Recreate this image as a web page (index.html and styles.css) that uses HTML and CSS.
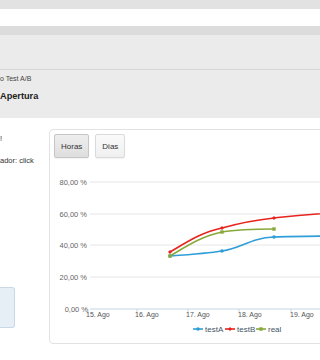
FILE: index.html
```html
<!DOCTYPE html>
<html lang="es">
<head>
    <meta charset="UTF-8">
    <meta name="viewport" content="width=device-width, initial-scale=1.0">
    <title>Test A/B - Apertura</title>
    <link rel="stylesheet" href="styles.css">
</head>
<body>
    <div class="topbar"></div>
    <div class="searchbar"></div>
    <div class="navbar"></div>
    <div class="toolbar"></div>

    <div class="titlebar">
        <p class="crumb">o Test A/B</p>
        <h1>Apertura</h1>
    </div>

    <div class="content">
        <div class="sidebar">
            <p class="note">!</p>
            <p class="note second">ador: click</p>
            <div class="infobox"></div>
        </div>

        <div class="chart-card">
            <div class="range-buttons">
                <button class="btn active">Horas</button>
                <button class="btn">Dias</button>
            </div>
            <svg class="chart" width="298" height="181" viewBox="0 0 298 181">
                <!-- grid -->
                <g class="grid">
                    <line x1="40" y1="20" x2="300" y2="20"/>
                    <line x1="40" y1="52" x2="300" y2="52"/>
                    <line x1="40" y1="83" x2="300" y2="83"/>
                    <line x1="40" y1="115" x2="300" y2="115"/>
                </g>
                <g class="axis">
                    <line x1="40" y1="147" x2="300" y2="147"/>
                    <line x1="38" y1="147" x2="38" y2="151"/>
                    <line x1="87" y1="147" x2="87" y2="151"/>
                    <line x1="138" y1="147" x2="138" y2="151"/>
                    <line x1="189" y1="147" x2="189" y2="151"/>
                    <line x1="241" y1="147" x2="241" y2="151"/>
                </g>
                <g class="ylabels">
                    <text x="37" y="22.7">80,00 %</text>
                    <text x="37" y="54.7">60,00 %</text>
                    <text x="37" y="85.7">40,00 %</text>
                    <text x="37" y="117.7">20,00 %</text>
                    <text x="38" y="149.7">0,00 %</text>
                </g>
                <g class="xlabels">
                    <text x="36" y="155">15. Ago</text>
                    <text x="85" y="155">16. Ago</text>
                    <text x="136" y="155">17. Ago</text>
                    <text x="188" y="155">18. Ago</text>
                    <text x="240" y="155">19. Ago</text>
                </g>

                <!-- series -->
                <path class="s-a" d="M120,94 C148,92 160,91 172,89 C192,86 200,76 224,75 C245,74 260,74 300,74"/>
                <path class="s-b" d="M120,90 C137,80 152,70 172,66 C190,61 205,58 224,56 C242,54 258,52 300,50"/>
                <path class="s-c" d="M120,94 C137,84 152,74 172,70 C190,67 205,67 224,67"/>

                <g class="m-a">
                    <circle cx="120" cy="94" r="1.8"/>
                    <circle cx="172" cy="89" r="1.8"/>
                    <circle cx="224" cy="75" r="1.8"/>
                </g>
                <g class="m-b">
                    <path d="M120,88 l2,2 -2,2 -2,-2z"/>
                    <path d="M172,64 l2,2 -2,2 -2,-2z"/>
                    <path d="M224,54 l2,2 -2,2 -2,-2z"/>
                </g>
                <g class="m-c">
                    <rect x="118.3" y="92.3" width="3.4" height="3.4"/>
                    <rect x="170.3" y="68.3" width="3.4" height="3.4"/>
                    <rect x="222.3" y="65.3" width="3.4" height="3.4"/>
                </g>

                <!-- legend -->
                <g class="legend">
                    <line class="s-a" x1="143" y1="167" x2="153" y2="167"/>
                    <circle class="m-a" cx="148" cy="167" r="1.8"/>
                    <text x="155" y="169.7">testA</text>
                    <line class="s-b" x1="175" y1="167" x2="185" y2="167"/>
                    <path class="m-b" d="M180,165 l2,2 -2,2 -2,-2z"/>
                    <text x="187" y="169.7">testB</text>
                    <line class="s-c" x1="206" y1="167" x2="216" y2="167"/>
                    <rect class="m-c" x="209.3" y="165.3" width="3.4" height="3.4"/>
                    <text x="218" y="169.7">real</text>
                </g>
            </svg>
        </div>
    </div>
</body>
</html>
```

FILE: styles.css
```css
body {
    margin: 0;
    font-family: 'Liberation Sans', Arial, sans-serif;
    color: #333;
    background-color: #fff;
    overflow: hidden;
}
.topbar {
    height: 9px;
    background-color: #e2e2e2;
}
.searchbar {
    height: 17px;
    background-color: #fff;
}
.navbar {
    height: 9px;
    background-color: #dcdcdc;
}
.toolbar {
    height: 34px;
    background-color: #ebebeb;
    border-bottom: 1px solid #d6d6d6;
}
.titlebar {
    height: 48px;
    background-color: #ebebeb;
    overflow: hidden;
}
.crumb {
    margin: 4px 0 0;
    font-size: 7px;
    line-height: 10px;
    color: #444;
}
.titlebar h1 {
    margin: 6px 0 0;
    font-size: 9.2px;
    line-height: 12px;
    font-weight: bold;
    color: #222;
}
.content {
    display: flex;
    padding-top: 11px;
    overflow: hidden;
}
.sidebar {
    width: 49px;
    flex-shrink: 0;
    padding-top: 5px;
}
.note {
    margin: 0;
    font-size: 7.5px;
    line-height: 10px;
    color: #333;
    white-space: nowrap;
}
.note.second {
    margin-top: 12px;
}
.infobox {
    width: 14px;
    height: 39px;
    margin-top: 121px;
    background-color: #e6eef6;
    border: 1px solid #c9d8e5;
    border-left: none;
    border-radius: 0 3px 3px 0;
}
.chart-card {
    width: 298px;
    flex-shrink: 0;
    border: 1px solid #e2e2e2;
    border-radius: 4px;
    background-color: #fff;
}
.range-buttons {
    display: flex;
    gap: 6px;
    padding: 4px 4px 0;
}
.btn {
    height: 24px;
    padding: 0 6px;
    font-family: 'Liberation Sans', Arial, sans-serif;
    font-size: 8px;
    color: #333;
    background: linear-gradient(#fafafa, #f0f0f0);
    border: 1px solid #dadada;
    border-radius: 2px;
    box-shadow: 0 1px 1px rgba(0,0,0,0.05);
}
.btn.active {
    background: linear-gradient(#eeeeee, #dedede);
    border-color: #c6c6c6;
}
.chart {
    display: block;
    margin-top: 4px;
    font-family: 'Liberation Sans', Arial, sans-serif;
}
.grid line {
    stroke: #e6e6e6;
    stroke-width: 1;
}
.axis line {
    stroke: #c6d4e2;
    stroke-width: 1;
}
.ylabels text {
    font-size: 7.5px;
    fill: #666;
    text-anchor: end;
}
.xlabels text {
    font-size: 7px;
    fill: #555;
}
.legend text {
    font-size: 8px;
    fill: #445566;
}
.s-a, .s-b, .s-c {
    fill: none;
    stroke-width: 1.6;
}
.s-a { stroke: #2f9ed8; }
.s-b { stroke: #e8231d; }
.s-c { stroke: #89a83a; }
.m-a { fill: #2f9ed8; }
.m-b { fill: #e8231d; }
.m-c { fill: #89a83a; }
```
